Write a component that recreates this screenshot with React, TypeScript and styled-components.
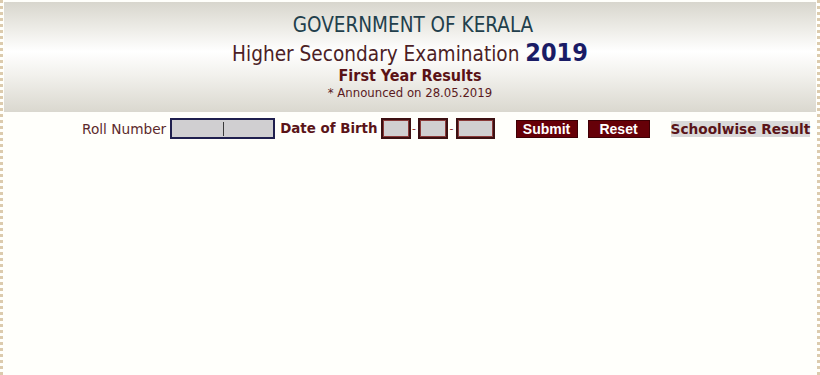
import React, { FC } from "react";
import styled, { createGlobalStyle } from "styled-components";

const GlobalStyle = createGlobalStyle`
  html, body {
    margin: 0;
    padding: 0;
    background: #fffffb;
  }
  #root {
    min-height: 375px;
  }
`;

const Page = styled.div`
  box-sizing: border-box;
  min-height: 375px;
  border-left: 3px dotted #dccbad;
  border-right: 3px dotted #dccbad;
  background: #fffffb;
  padding: 2px 1px 0;
  overflow: hidden;
`;

const Header = styled.header`
  height: 110px;
  background: linear-gradient(
    to bottom,
    #d8d6cd 0%,
    #eeede8 25%,
    #ffffff 45%,
    #f3f2ee 65%,
    #dad8cf 100%
  );
  display: flex;
  flex-direction: column;
  align-items: center;
  font-family: "DejaVu Sans Condensed", "DejaVu Sans", sans-serif;
  padding-top: 10px;
  box-sizing: border-box;
`;

const Government = styled.div`
  color: #223f4c;
  font-size: 20.5px;
  line-height: 26px;
  margin-left: 6px;
`;

const Exam = styled.div`
  color: #4c1f26;
  font-size: 20.6px;
  line-height: 28px;
  margin-top: 1px;
`;

const Year = styled.span`
  color: #1a1c66;
  font-size: 25px;
  font-weight: bold;
`;

const SubTitle = styled.div`
  color: #5a1216;
  font-size: 16px;
  font-weight: bold;
  line-height: 18px;
  margin-top: -1px;
`;

const Announced = styled.div`
  color: #5a1a1d;
  font-size: 13px;
  line-height: 16px;
`;

const FormRow = styled.form`
  display: flex;
  align-items: center;
  padding: 6px 0 0 78px;
  font-family: "DejaVu Sans", Verdana, sans-serif;
  font-size: 13.7px;
  white-space: nowrap;

  & > * {
    flex-shrink: 0;
  }
`;

const Label = styled.label<{ $bold?: boolean }>`
  color: ${(p) => (p.$bold ? "#5a1418" : "#5c2a2c")};
  font-weight: ${(p) => (p.$bold ? "bold" : "normal")};
  font-size: ${(p) => (p.$bold ? "13.4px" : "13.7px")};
  margin: ${(p) => (p.$bold ? "0 3px 0 5px" : "0 4px 0 0")};
`;

const Field = styled.div<{ $w: number; $tone: "navy" | "maroon" }>`
  position: relative;
  box-sizing: border-box;
  width: ${(p) => p.$w}px;
  height: 21px;
  background: #d0cfd1;
  border: 2px solid ${(p) => (p.$tone === "navy" ? "#1f1f4e" : "#3c1012")};
  box-shadow: ${(p) => (p.$tone === "navy" ? "none" : "inset 0 0 0 1px #8a3a3a")};
`;

const Caret = styled.span`
  position: absolute;
  left: 51px;
  top: 2px;
  width: 1px;
  height: 14px;
  background: #3a3a3a;
`;

const Dash = styled.span<{ $w: number }>`
  color: #8a2424;
  font-size: 11px;
  width: ${(p) => p.$w}px;
  text-align: center;
`;

const Button = styled.button<{ $gap: number }>`
  box-sizing: border-box;
  width: 62px;
  height: 18px;
  padding: 0;
  margin-left: ${(p) => p.$gap}px;
  border: 1px solid #3e0005;
  background: #660008;
  color: #ffffff;
  font-family: "Liberation Sans", Arial, sans-serif;
  font-size: 14px;
  font-weight: bold;
  line-height: 16px;
  cursor: pointer;
`;

const SchoolLink = styled.a`
  margin-left: 21px;
  background: #d9d9d9;
  color: #5a1418;
  font-weight: bold;
  text-decoration: none;
  line-height: 16px;
`;

const App: FC = () => {
  return (
    <>
      <GlobalStyle />
      <Page>
        <Header>
          <Government>GOVERNMENT OF KERALA</Government>
          <Exam>
            Higher Secondary Examination <Year>2019</Year>
          </Exam>
          <SubTitle>First Year Results</SubTitle>
          <Announced>* Announced on 28.05.2019</Announced>
        </Header>
        <FormRow onSubmit={(e) => e.preventDefault()}>
          <Label>Roll Number</Label>
          <Field $w={105} $tone="navy">
            <Caret />
          </Field>
          <Label $bold>Date of Birth</Label>
          <Field $w={30} $tone="maroon" />
          <Dash $w={7}>-</Dash>
          <Field $w={30} $tone="maroon" />
          <Dash $w={8}>-</Dash>
          <Field $w={39} $tone="maroon" />
          <Button type="submit" $gap={21}>
            Submit
          </Button>
          <Button type="reset" $gap={10}>
            Reset
          </Button>
          <SchoolLink href="#">Schoolwise Result</SchoolLink>
        </FormRow>
      </Page>
    </>
  );
};

export default App;
